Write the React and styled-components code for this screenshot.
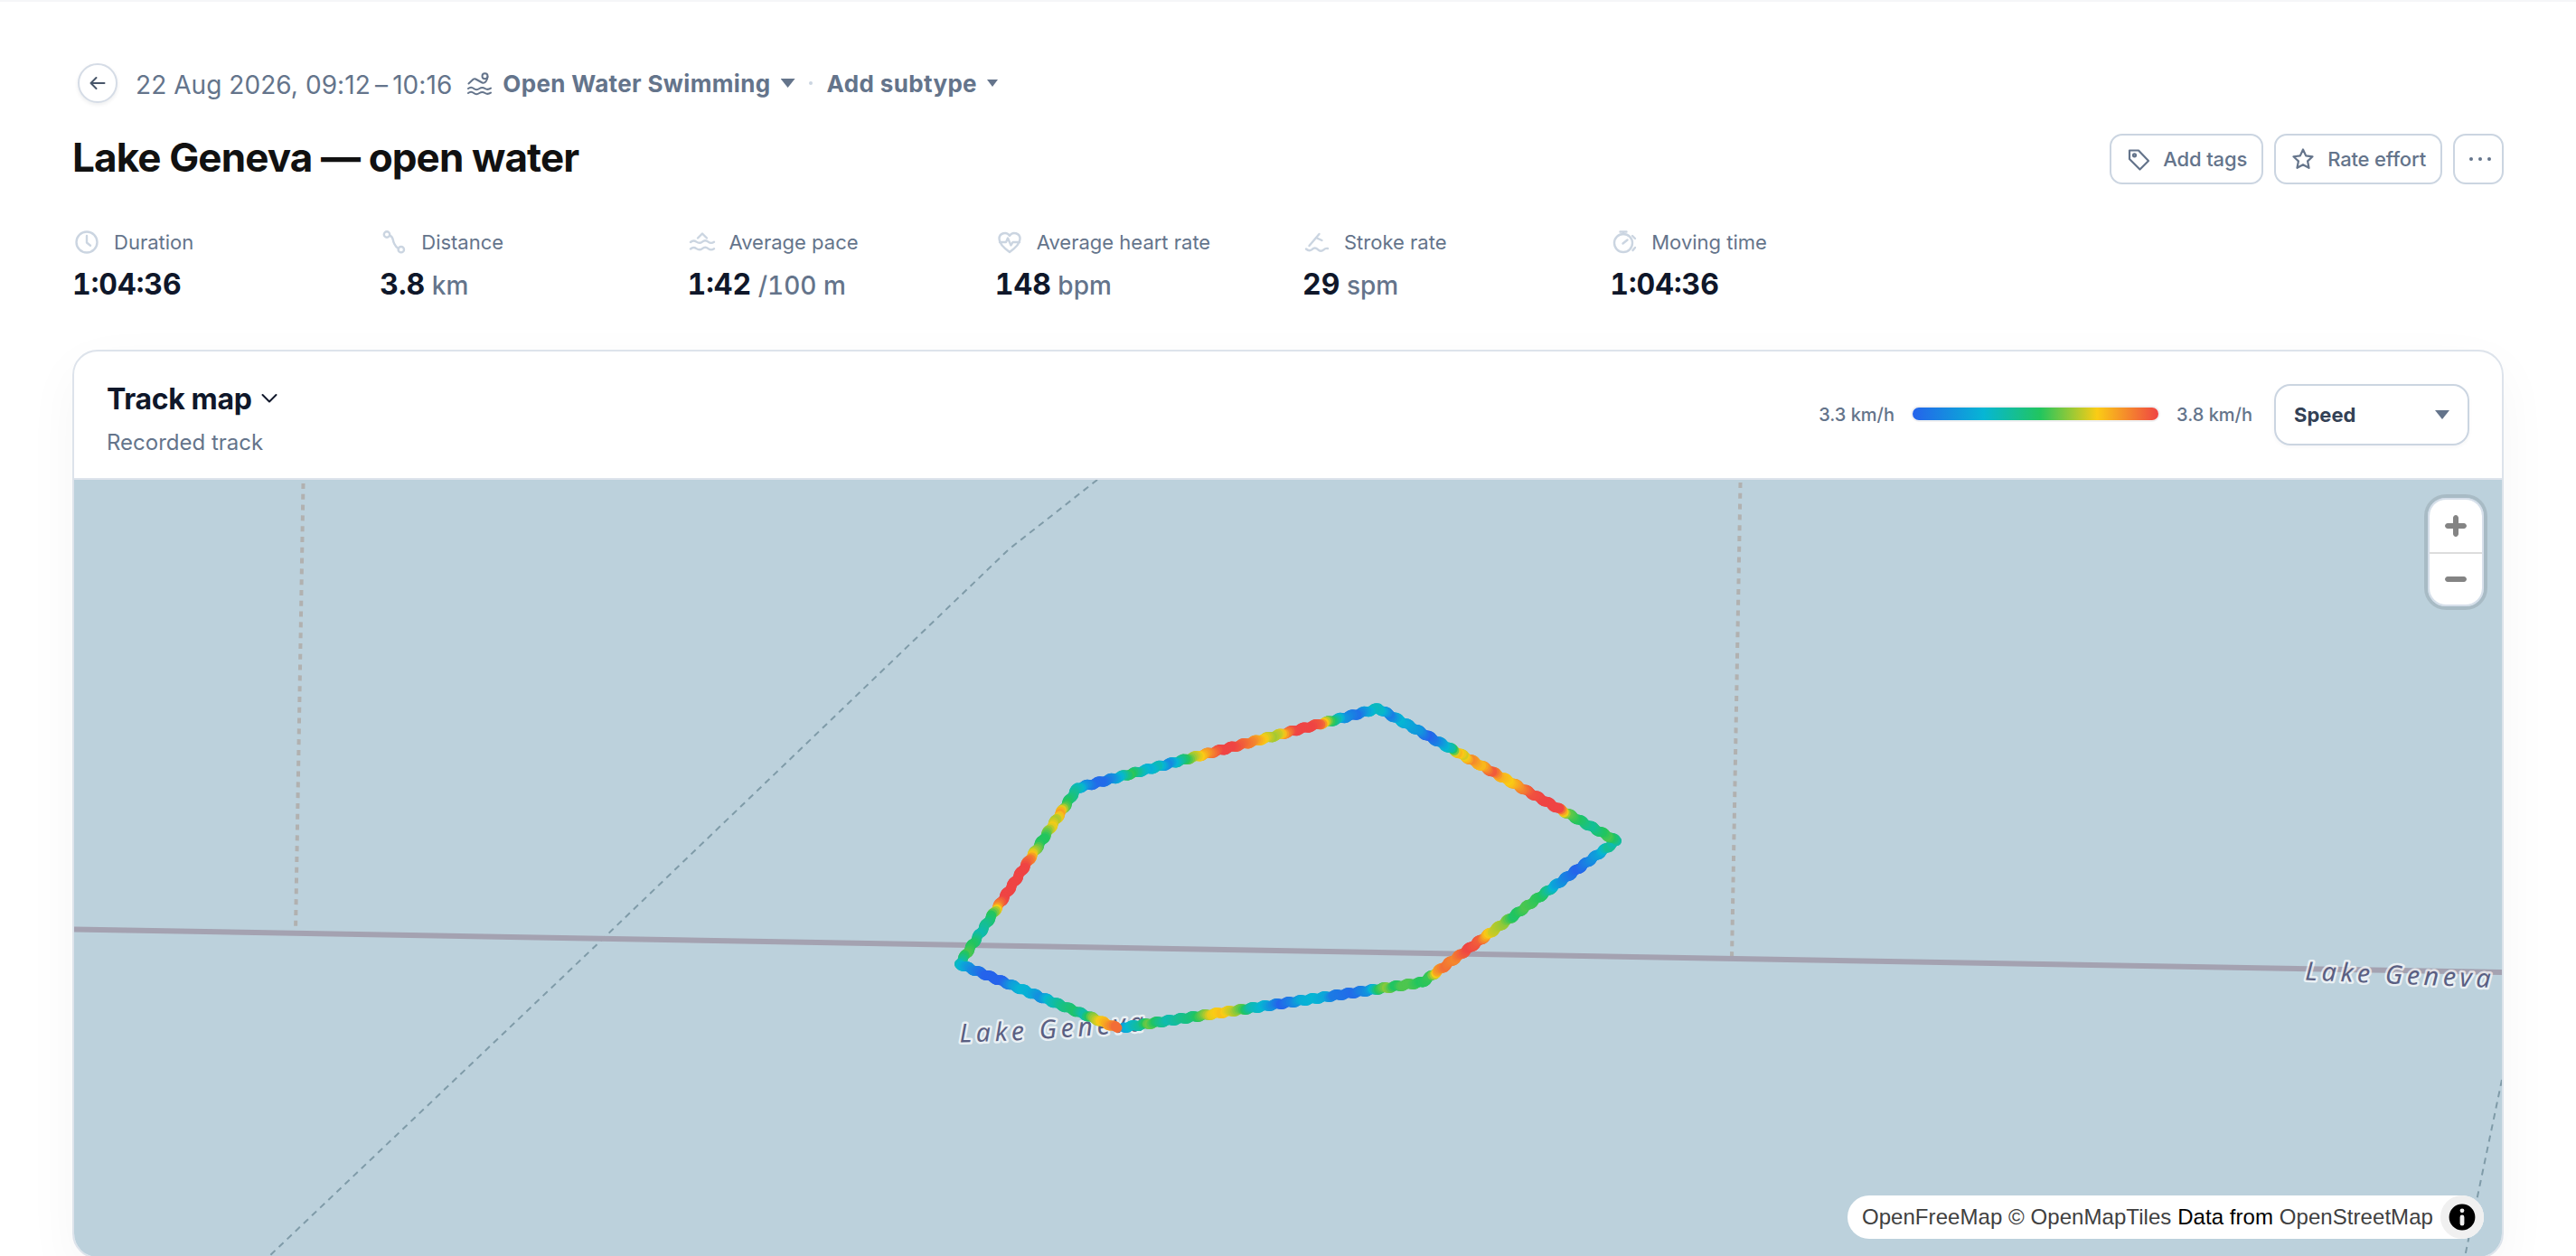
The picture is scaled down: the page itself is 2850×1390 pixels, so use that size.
import React from "react";
import styled, { createGlobalStyle } from "styled-components";

const PALETTE = [
  [37, 99, 235],
  [6, 182, 212],
  [34, 197, 94],
  [250, 204, 21],
  [239, 68, 68],
];

// One entry per leg of the swim: start, end and [x, speed] stops (0 = slowest, 4 = fastest)
const LEGS = [
  {
    from: [1243, 1136],
    to: [1574, 1086],
    stops: [
      [1243, 0.6], [1253, 1.1], [1265, 1.5], [1273, 2.4], [1285, 1.7], [1295, 1.3], [1310, 1.6],
      [1323, 1.8], [1333, 2.3], [1342, 2.9], [1355, 3.1], [1367, 2.7], [1377, 2.2], [1387, 1.3],
      [1400, 1], [1413, 0.4], [1420, 0], [1433, 0.4], [1443, 0.9], [1457, 1], [1470, 0.8],
      [1477, 0.3], [1500, 0.1], [1518, 0.6], [1528, 2], [1537, 2.5], [1546, 1.9], [1553, 2.2],
      [1563, 2.2], [1574, 2],
    ],
  },
  {
    from: [1574, 1086],
    to: [1788.5, 929.5],
    stops: [
      [1574, 2], [1585, 2.1], [1592, 3.3], [1600, 3.7], [1612, 3.5], [1620, 3.8], [1627, 4],
      [1640, 3.8], [1648, 3.1], [1653, 2.8], [1667, 2.5], [1677, 1.9], [1690, 2.2], [1708, 2],
      [1717, 1.4], [1723, 0.8], [1737, 0.3], [1748, 0], [1763, 0.5], [1773, 0.8], [1782, 1.6],
      [1788.5, 1.3],
    ],
  },
  {
    from: [1788.5, 929.5],
    to: [1525, 783],
    stops: [
      [1788.5, 1.3], [1783, 1.8], [1777, 2.2], [1767, 1.9], [1757, 1.5], [1742, 2], [1732, 2.3],
      [1723, 4], [1703, 4], [1690, 3.9], [1677, 3.4], [1667, 3], [1657, 3.2], [1648, 3.9],
      [1636, 3.1], [1625, 3.5], [1617, 2.8], [1610, 3.2], [1603, 1.4], [1595, 0.9], [1585, 0.3],
      [1577, 0], [1567, 0.6], [1555, 0.8], [1545, 1], [1535, 0.3], [1525, 1.1],
    ],
  },
  {
    from: [1525, 783],
    to: [1192, 871],
    stops: [
      [1525, 1.1], [1517, 1.2], [1507, 0.7], [1498, 0.15], [1483, 0.6], [1473, 1.7], [1467, 2.4],
      [1458, 3.8], [1448, 4], [1428, 4], [1420, 3.5], [1413, 2.8], [1405, 2.6], [1395, 3],
      [1383, 3.5], [1370, 3.8], [1360, 4], [1347, 4], [1337, 3.6], [1327, 3.1], [1317, 2.6],
      [1308, 1.9], [1298, 1.1], [1289, 0.4], [1278, 1.3], [1268, 0.9], [1260, 1.2], [1248, 2.1],
      [1237, 1.1], [1227, 0.5], [1217, 0.1], [1207, 0.1], [1197, 0.6], [1192, 1.1],
    ],
  },
  {
    from: [1192, 871],
    to: [1061.5, 1066],
    stops: [
      [1192, 1.1], [1187, 1.5], [1182, 1.8], [1177, 2.2], [1172, 3.4], [1167, 2.6], [1162, 3],
      [1158, 2.4], [1154, 2], [1149, 2], [1143, 2.7], [1138, 3.6], [1132, 4], [1127, 4],
      [1108, 4], [1103, 3.5], [1100, 2.7], [1096, 2], [1089, 1.6], [1082, 1.3], [1076, 1.9],
      [1068, 2.2], [1061.5, 1.4],
    ],
  },
  {
    from: [1061.5, 1066],
    to: [1236, 1136.5],
    stops: [
      [1061.5, 1.3], [1070, 0.8], [1080, 0.4], [1093, 0], [1112, 0], [1123, 0.7], [1133, 1],
      [1143, 0.9], [1154, 0.5], [1163, 1.1], [1177, 1.6], [1192, 1.9], [1202, 1.3], [1210, 2.4],
      [1220, 3], [1228, 3.3], [1236, 3.7],
    ],
  },
];

const STATS = [
  { icon: ClockIcon, label: "Duration", value: "1:04:36" },
  { icon: DistanceIcon, label: "Distance", value: "3.8", unit: "km" },
  { icon: PaceIcon, label: "Average pace", value: "1:42", unit: "/100 m" },
  { icon: HeartIcon, label: "Average heart rate", value: "148", unit: "bpm" },
  { icon: StrokeIcon, label: "Stroke rate", value: "29", unit: "spm" },
  { icon: StopwatchIcon, label: "Moving time", value: "1:04:36" },
];

function speedColor(value) {
  const i = Math.min(3, Math.floor(value));
  const t = value - i;
  const rgb = PALETTE[i].map((c, k) => Math.round(c + (PALETTE[i + 1][k] - c) * t));
  return `rgb(${rgb.join(",")})`;
}

function speedAt(stops, x) {
  for (let i = 1; i < stops.length; i++) {
    const [x0, v0] = stops[i - 1];
    const [x1, v1] = stops[i];
    if ((x - x0) * (x - x1) <= 0) {
      return v0 + ((v1 - v0) * (x - x0)) / (x1 - x0);
    }
  }
  return stops[stops.length - 1][1];
}

function buildTrack() {
  const points = [];
  LEGS.forEach(({ from, to, stops }, leg) => {
    const dx = to[0] - from[0];
    const dy = to[1] - from[1];
    const length = Math.hypot(dx, dy);
    const waves = Math.round(length / 13.6);
    const steps = waves * 6;
    for (let i = leg ? 1 : 0; i <= steps; i++) {
      const t = i / steps;
      const off = 0.95 * Math.sin(t * waves * Math.PI * 2);
      const x = from[0] + dx * t;
      points.push({
        x: x - (dy / length) * off,
        y: from[1] + dy * t + (dx / length) * off,
        color: speedColor(speedAt(stops, x)),
      });
    }
  });
  return points;
}

const track = buildTrack();

function ClockIcon() {
  return (
    <StatIcon viewBox="0 0 32 32">
      <circle cx="16" cy="16" r="11.5" />
      <path d="M16 9v7.5l4 3.2" />
    </StatIcon>
  );
}

function DistanceIcon() {
  return (
    <StatIcon viewBox="0 0 32 32">
      <circle cx="8" cy="7.5" r="3.2" />
      <circle cx="23.8" cy="24.2" r="3.2" />
      <path d="M11.2 8.6c4.3 1.4 3 5 4.6 8.2s2 4.7 5 6.2" />
    </StatIcon>
  );
}

function PaceIcon() {
  return (
    <StatIcon viewBox="0 0 32 32">
      <path d="M11 11.5l5-5 5 5" />
      <path d="M3 16c2.2-2 4.3-2 6.5-.4s4.3 1.7 6.5 0 4.3-1.7 6.5 0 4.3 1.7 6.5.2" />
      <path d="M3 23.5c2.2-2 4.3-2 6.5-.4s4.3 1.7 6.5 0 4.3-1.7 6.5 0 4.3 1.7 6.5.2" />
    </StatIcon>
  );
}

function HeartIcon() {
  return (
    <StatIcon viewBox="0 0 32 32">
      <path d="M16 27C9 22 4.5 17.5 4.5 12.3A6.2 6.2 0 0 1 16 9a6.2 6.2 0 0 1 11.5 3.3C27.5 17.5 23 22 16 27z" />
      <path d="M5 16h7l2-4.5 3.5 8 2-3.5H27" />
    </StatIcon>
  );
}

function StrokeIcon() {
  return (
    <StatIcon viewBox="0 0 32 32">
      <path d="M7.500 20L18.500 7M15 11l6.500 3" />
      <path d="M4 23.5c2.5 2.2 4.5 2.2 6.500.6 2-2 4.5-2 6.5 0s4.5 2 6.5.2 3-1.5 4.5-1.3" />
    </StatIcon>
  );
}

function StopwatchIcon() {
  return (
    <StatIcon viewBox="0 0 32 32">
      <circle cx="15" cy="17" r="10" />
      <path d="M11.5 4.5h7M15 5v2M14.5 17.5l5-4M25 9l3 3M25.5 25l2.5-3" />
    </StatIcon>
  );
}

function SwimIcon() {
  return (
    <SportIcon viewBox="0 0 28 28">
      <circle cx="21.5" cy="6.3" r="3" />
      <path d="M3.5 14.5L8.6 9.8q1.2-1 2.6-.3L18.5 13.5c3 1.2 5.5-2 6-6.5" />
      <path d="M3 20c2.2-1.8 4-1.8 6.2 0s4 1.5 6.2 0 4-1.5 6.2 0 4 1.2 6.4-.4" />
      <path d="M3 25c2.2-1.8 4-1.8 6.2 0s4 1.5 6.2 0 4-1.5 6.2 0 4 1.2 6.4-.4" />
    </SportIcon>
  );
}

function TrackMap() {
  return (
    <MapCanvas viewBox="82 530 2686 860">
      <defs>
        <path id="label-west" d="M1062 1152.500Q1170 1150 1300 1136" />
        <path id="label-east" d="M2550 1083.500L2790 1093.500" />
      </defs>
      <path d="M335.500 534L327 1031" stroke="#b1b1b0" strokeWidth="4" strokeDasharray="6 5.8" />
      <path d="M1925.500 533L1916 1060" stroke="#b1b1b0" strokeWidth="4" strokeDasharray="6 5.8" />
      <path d="M1214 530L1116 607L667 1038L297 1390" stroke="#7f9ba8" strokeWidth="2" strokeDasharray="7 5.6" />
      <path d="M2768 1194L2727 1390" stroke="#7f9ba8" strokeWidth="2" strokeDasharray="7 5.6" />
      <path d="M82 1027.500L2768 1075" stroke="#a4a2b1" strokeWidth="6" />
      <MapLabel>
        <textPath href="#label-west">Lake Geneva</textPath>
      </MapLabel>
      <MapLabel>
        <textPath href="#label-east">Lake Geneva</textPath>
      </MapLabel>
      <g strokeWidth="11" strokeLinecap="round">
        {track.slice(1).map((p, i) => (
          <line key={i} x1={track[i].x} y1={track[i].y} x2={p.x} y2={p.y} stroke={p.color} />
        ))}
      </g>
    </MapCanvas>
  );
}

export default function App() {
  return (
    <>
      <GlobalStyle />
      <Page>
        <MetaRow>
          <BackButton aria-label="Back">
            <svg width="20" height="20" viewBox="0 0 20 20">
              <path d="M17.500 10H2.500M8.500 4L2.500 10l6 6" />
            </svg>
          </BackButton>
          <DateText>22 Aug 2026, 09:12{"\u2009"}–{"\u2009"}10:16</DateText>
          <SwimIcon />
          <SportPicker>
            Open Water Swimming
            <Caret $w={16} $h={10} />
          </SportPicker>
          <Separator />
          <SportPicker>
            Add subtype
            <Caret $w={12} $h={8} />
          </SportPicker>
        </MetaRow>

        <TitleRow>
          <Title>Lake Geneva — open water</Title>
          <Actions>
            <ActionButton>
              <svg width="28" height="28" viewBox="0 0 28 28">
                <path d="M4 4.500v9.500L15.500 25.500l9.500-9.500L14 4.500z" />
                <circle cx="9.500" cy="9.800" r="1.500" />
              </svg>
              Add tags
            </ActionButton>
            <ActionButton>
              <svg width="28" height="28" viewBox="0 0 28 28">
                <path d="M14 3.500l3.200 6.900 7.300.9-5.400 5.100 1.400 7.400-6.500-3.600-6.500 3.600 1.400-7.400-5.400-5.100 7.300-.9z" />
              </svg>
              Rate effort
            </ActionButton>
            <MoreButton aria-label="More">
              <i />
              <i />
              <i />
            </MoreButton>
          </Actions>
        </TitleRow>

        <Stats>
          {STATS.map(({ icon: Icon, label, value, unit }) => (
            <div key={label}>
              <StatLabel>
                <Icon />
                {label}
              </StatLabel>
              <StatValue>
                {value}
                {unit && <span> {unit}</span>}
              </StatValue>
            </div>
          ))}
        </Stats>

        <Card>
          <CardHeader>
            <CardHeading>
              <CardTitle>
                Track map
                <svg width="20" height="20" viewBox="0 0 20 20">
                  <path d="M2.500 5l7.500 7.500L17.500 5" />
                </svg>
              </CardTitle>
              <CardSubtitle>Recorded track</CardSubtitle>
            </CardHeading>
            <Legend>
              <span>3.3 km/h</span>
              <LegendBar />
              <span>3.8 km/h</span>
              <MetricSelect>
                Speed
                <Caret $w={16} $h={10} />
              </MetricSelect>
            </Legend>
          </CardHeader>
          <MapArea>
            <TrackMap />
            <ZoomControl>
              <ZoomButton aria-label="Zoom in">
                <svg viewBox="0 0 29 29">
                  <path d="M14.5 8.5c-.75 0-1.5.75-1.5 1.5v3h-3c-.75 0-1.5.75-1.5 1.5S9.250 16 10 16h3v3c0 .75.75 1.5 1.5 1.5S16 19.750 16 19v-3h3c.75 0 1.5-.75 1.5-1.5S19.750 13 19 13h-3v-3c0-.75-.75-1.5-1.5-1.5" />
                </svg>
              </ZoomButton>
              <ZoomButton aria-label="Zoom out">
                <svg viewBox="0 0 29 29">
                  <path d="M10 13c-.75 0-1.5.75-1.5 1.5S9.250 16 10 16h9c.75 0 1.5-.75 1.5-1.5S19.750 13 19 13z" />
                </svg>
              </ZoomButton>
            </ZoomControl>
            <Attribution>
              <p>
                <a>OpenFreeMap</a> <a>© OpenMapTiles</a> Data from <a>OpenStreetMap</a>
              </p>
              <InfoButton>
                <svg width="48" height="48" viewBox="0 0 20 20" fillRule="evenodd">
                  <path d="M4 10a6 6 0 1 0 12 0 6 6 0 1 0-12 0m5-3a1 1 0 1 0 2 0 1 1 0 1 0-2 0m0 3a1 1 0 1 1 2 0v3a1 1 0 1 1-2 0" />
                </svg>
              </InfoButton>
            </Attribution>
          </MapArea>
        </Card>
      </Page>
    </>
  );
}

const GlobalStyle = createGlobalStyle`
  * {
    box-sizing: border-box;
  }
  body {
    margin: 0;
    overflow: hidden;
    background: #fff;
    font-family: Inter, "Liberation Sans", sans-serif;
  }
  button {
    font: inherit;
    color: inherit;
    background: #fff;
    padding: 0;
  }
`;

const Page = styled.main`
  height: 1390px;
  overflow: hidden;
  padding: 68px 80px 0;
  border-top: 2px solid #f5f6f8;
`;

const MetaRow = styled.div`
  display: flex;
  align-items: center;
  height: 44px;
  padding-left: 6px;
  color: #64748b;
`;

const BackButton = styled.button`
  display: flex;
  align-items: center;
  justify-content: center;
  width: 44px;
  height: 44px;
  border: 2px solid #d5dce6;
  border-radius: 50%;
  box-shadow: 0 2px 4px rgba(15, 23, 42, 0.08);
  svg {
    fill: none;
    stroke: #475569;
    stroke-width: 2;
    stroke-linecap: round;
    stroke-linejoin: round;
  }
`;

const DateText = styled.span`
  margin-left: 20px;
  padding-top: 3px;
  font-size: 28px;
  line-height: 40px;
  letter-spacing: 0.06px;
`;

const SportIcon = styled.svg`
  width: 28px;
  height: 28px;
  margin: 0 13px 0 15px;
  overflow: visible;
  fill: none;
  stroke: #64748b;
  stroke-width: 2;
  stroke-linecap: round;
  stroke-linejoin: round;
`;

const SportPicker = styled.span`
  display: flex;
  align-items: center;
  gap: 11px;
  font-size: 26px;
  font-weight: 700;
  letter-spacing: 0.35px;
`;

const Caret = styled.i`
  width: ${({ $w }) => $w}px;
  height: ${({ $h }) => $h}px;
  background: #64748b;
  clip-path: polygon(0 0, 100% 0, 50% 100%);
`;

const Separator = styled.i`
  width: 4px;
  height: 4px;
  margin: 0 16px 0 15px;
  border-radius: 50%;
  background: #cbd5e1;
`;

const TitleRow = styled.div`
  display: flex;
  align-items: center;
  justify-content: space-between;
  margin-top: 34px;
`;

const Title = styled.h1`
  margin: 0;
  padding-bottom: 4px;
  color: #111;
  font-size: 44px;
  line-height: 52px;
  font-weight: 700;
  letter-spacing: -0.88px;
`;

const Actions = styled.div`
  display: flex;
  gap: 12px;
`;

const ActionButton = styled.button`
  display: flex;
  align-items: center;
  gap: 13px;
  height: 56px;
  padding: 0 16px;
  border: 2px solid #cbd5e1;
  border-radius: 14px;
  color: #64748b;
  font-size: 22px;
  font-weight: 500;
  letter-spacing: -0.15px;
  svg {
    fill: none;
    stroke: #64748b;
    stroke-width: 2.2;
    stroke-linejoin: round;
  }
`;

const MoreButton = styled(ActionButton)`
  justify-content: center;
  width: 56px;
  padding: 0 0 0 4px;
  gap: 6px;
  i {
    width: 4px;
    height: 4px;
    border-radius: 50%;
    background: #64748b;
  }
`;

const Stats = styled.div`
  display: grid;
  grid-template-columns: repeat(8, 1fr);
  column-gap: 32px;
  margin-top: 48px;
`;

const StatLabel = styled.div`
  display: flex;
  align-items: center;
  gap: 14px;
  height: 32px;
  color: #64748b;
  font-size: 22px;
  white-space: nowrap;
`;

const StatIcon = styled.svg`
  width: 32px;
  height: 32px;
  fill: none;
  stroke: #cbd5e1;
  stroke-width: 2.4;
  stroke-linecap: round;
  stroke-linejoin: round;
`;

const StatValue = styled.div`
  margin-top: 11px;
  color: #0f172a;
  font-size: 32px;
  line-height: 40px;
  font-weight: 700;
  font-variant-numeric: tabular-nums;
  span {
    color: #64748b;
    font-size: 28px;
    font-weight: 500;
  }
`;

const Card = styled.section`
  margin-top: 51px;
  border: 2px solid #dde3eb;
  border-radius: 28px;
  overflow: hidden;
  box-shadow: 0 20px 60px rgba(15, 23, 42, 0.04);
`;

const CardHeader = styled.header`
  display: flex;
  align-items: center;
  justify-content: space-between;
  height: 142px;
  padding: 0 36px;
  border-bottom: 2px solid #dde3eb;
`;

const CardHeading = styled.div`
  padding-top: 7px;
`;

const CardTitle = styled.h2`
  display: flex;
  align-items: center;
  gap: 9px;
  margin: 0;
  color: #0f172a;
  font-size: 32px;
  line-height: 48px;
  font-weight: 700;
  letter-spacing: -0.35px;
  svg {
    fill: none;
    stroke: #0f172a;
    stroke-width: 2;
    stroke-linecap: round;
    stroke-linejoin: round;
  }
`;

const CardSubtitle = styled.p`
  margin: 6px 0 0;
  color: #64748b;
  font-size: 24px;
  line-height: 36px;
`;

const Legend = styled.div`
  display: flex;
  align-items: center;
  gap: 20px;
  color: #64748b;
  font-size: 20px;
  font-weight: 500;
`;

const LegendBar = styled.div`
  width: 272px;
  height: 14px;
  margin-bottom: 2px;
  border-radius: 7px;
  background: linear-gradient(90deg, #2563eb, #06b6d4 29%, #22c55e 52%, #facc15 75%, #ef4444);
  box-shadow: 0 0 0 2px rgba(15, 23, 42, 0.06);
`;

const MetricSelect = styled.div`
  display: flex;
  align-items: center;
  justify-content: space-between;
  width: 216px;
  height: 68px;
  margin-left: 4px;
  padding: 0 20px;
  border: 2px solid #cbd5e1;
  border-radius: 18px;
  box-shadow: 0 2px 4px rgba(15, 23, 42, 0.04);
  color: #334155;
  font-size: 22px;
  font-weight: 700;
`;

const MapArea = styled.div`
  position: relative;
  height: 860px;
  background: #bcd1dc;
`;

const MapCanvas = styled.svg`
  display: block;
  width: 100%;
  height: 100%;
  fill: none;
`;

const MapLabel = styled.text`
  fill: #5a5f82;
  stroke: rgba(255, 255, 255, 0.7);
  stroke-width: 5px;
  stroke-linejoin: round;
  paint-order: stroke;
  font: italic 28.5px "Noto Sans", sans-serif;
  letter-spacing: 4.7px;
`;

const ZoomControl = styled.div`
  position: absolute;
  top: 20px;
  right: 20px;
  width: 62px;
  height: 120px;
  border: 2px solid #d6dfea;
  border-radius: 20px;
  overflow: hidden;
  box-shadow: 0 0 0 4px rgba(0, 0, 0, 0.1);
`;

const ZoomButton = styled.button`
  display: block;
  width: 58px;
  height: 58px;
  border: 0;
  & + & {
    border-top: 2px solid #ddd;
  }
  svg {
    display: block;
    width: 58px;
    height: 58px;
    fill: #848484;
  }
  & + & svg {
    margin-top: -1px;
  }
`;

const Attribution = styled.div`
  position: absolute;
  right: 20px;
  bottom: 20px;
  display: flex;
  align-items: center;
  height: 48px;
  padding-left: 16px;
  border-radius: 24px;
  background: #fff;
  font: 24px/40px "Liberation Sans", Arial, sans-serif;
  letter-spacing: 0.06px;
  color: #000;
  p {
    margin: 0 8px 0 0;
  }
  a {
    color: #404040;
  }
`;

const InfoButton = styled.span`
  height: 48px;
  border-radius: 50%;
  background: #f0f0f0;
`;
